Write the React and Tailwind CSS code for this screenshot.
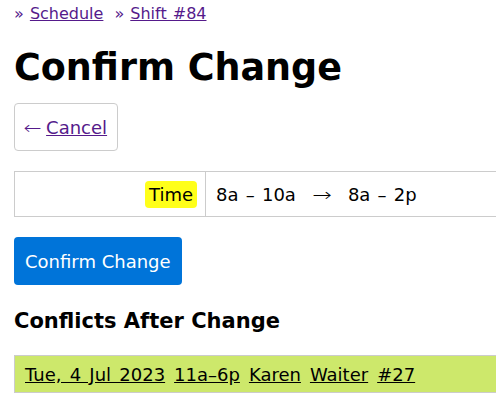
export default function App() {
  return (
    <div className="px-[14px] pt-[4px] text-[18px] text-black bg-white min-h-screen" style={{ fontFamily: '"DejaVu Sans", Verdana, sans-serif' }}>
      {/* breadcrumb */}
      <nav className="flex gap-[11px] text-[16px] leading-[20px] text-[#551a8b] [word-spacing:1px]">
        <span>» <a href="#" className="underline">Schedule</a></span>
        <span>» <a href="#" className="underline">Shift #84</a></span>
      </nav>

      <h1 className="mt-[22px] text-[36.5px] font-bold leading-[44px]">Confirm Change</h1>

      <div className="mt-[13px] inline-flex items-center h-[48px] px-[10px] border border-[#ccc] rounded-[4px] text-[#551a8b]">
        <span className="inline-block mr-[6px] scale-x-[1.2] font-extralight">←</span>
        <a href="#" className="underline">Cancel</a>
      </div>

      <div className="mt-[20px] flex w-[520px] h-[46px] border border-[#ccc]">
        <div className="w-[191px] flex items-center justify-end pr-[8px] border-r border-[#ccc]">
          <span className="bg-[#ffff1a] rounded-[4px] px-[4px] leading-[27px]">Time</span>
        </div>
        <div className="flex items-center pl-[10px] whitespace-pre [word-spacing:1.5px]">
          <span>8a – 10a</span>
          <span className="inline-block w-[52px] text-center scale-x-[1.3] font-extralight">→</span>
          <span>8a – 2p</span>
        </div>
      </div>

      <button className="mt-[20px] h-[48px] px-[11px] rounded-[4px] bg-[#0074d9] text-white">Confirm Change</button>

      <h2 className="mt-[23px] text-[21px] font-bold leading-[26px]">Conflicts After Change</h2>

      <div className="mt-[21px] w-[520px] h-[38px] flex items-center gap-[9px] pl-[10px] bg-[#cde86b] border border-[#ccc] [word-spacing:2.5px]">
        <a href="#" className="underline">Tue, 4 Jul 2023</a>
        <a href="#" className="underline">11a–6p</a>
        <a href="#" className="underline">Karen</a>
        <a href="#" className="underline">Waiter</a>
        <a href="#" className="underline">#27</a>
      </div>
    </div>
  );
}
